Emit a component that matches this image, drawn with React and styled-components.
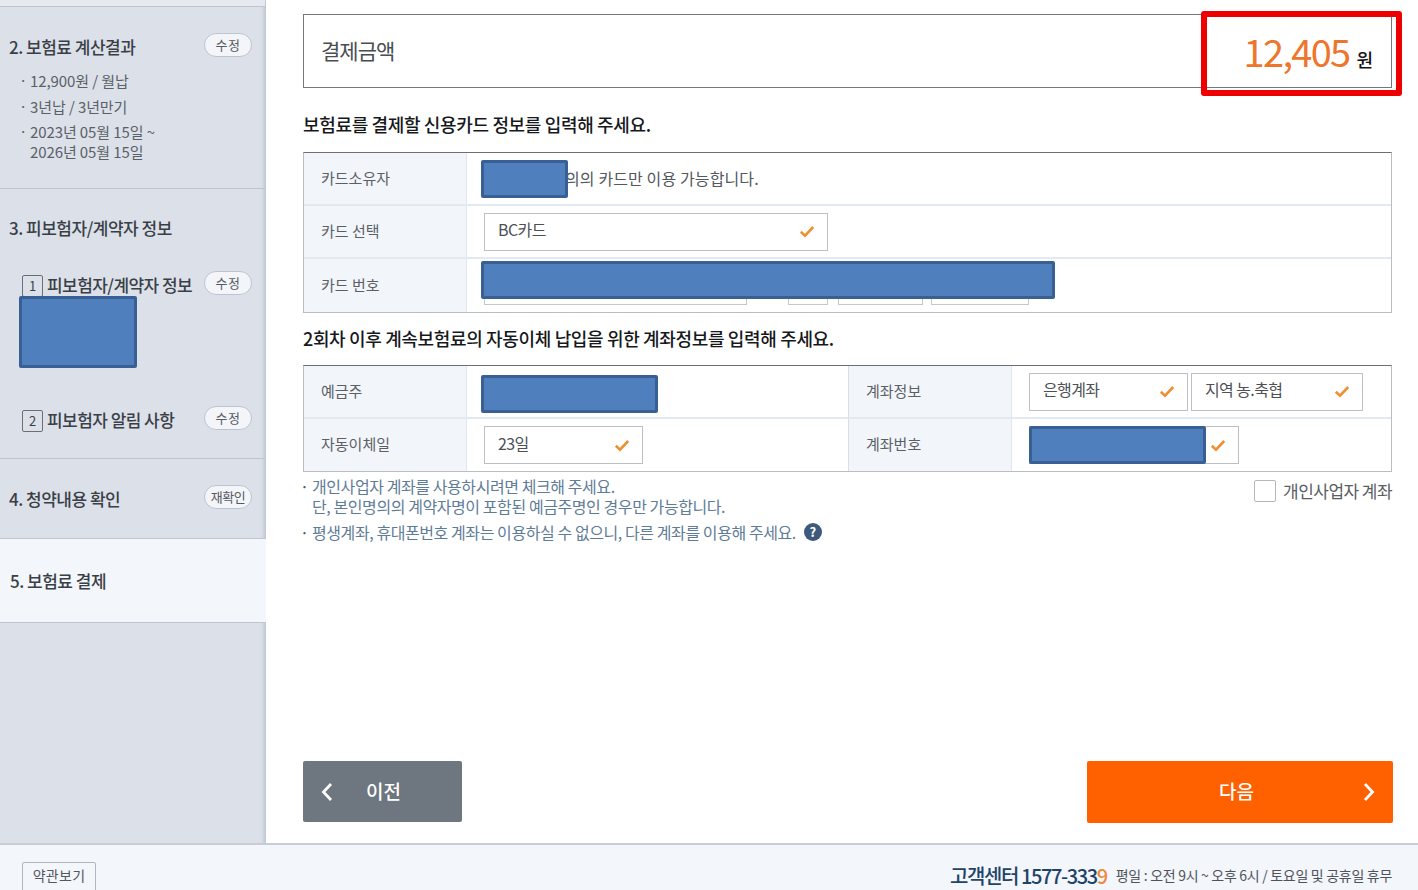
import React from 'react';
import styled, {createGlobalStyle} from 'styled-components';

const FONT = '"Noto Sans CJK KR", "Noto Sans", sans-serif';

const Global = createGlobalStyle`
	html, body {
		margin: 0;
		padding: 0;
		background: #fff;
		font-family: ${FONT};
	}
	* {
		box-sizing: border-box;
	}
`;

const Page = styled.div`
	width: 1418px;
	height: 890px;
	overflow: hidden;
	display: flex;
	flex-direction: column;
`;

const Body = styled.div`
	display: flex;
	height: 843px;
`;

const Side = styled.aside`
	width: 266px;
	flex: none;
	background: #dce1e9;
	border-right: 1px solid #c3c8d1;
	box-shadow: inset -4px 0 3px -2px #c6ccd6;
`;

const TopStrip = styled.div`
	height: 6px;
	background: #e6eaf0;
`;

const SideBlock = styled.section`
	position: relative;
	height: ${(p) => p.$h}px;
	padding: ${(p) => p.$pad || '0'};
	border-top: 1px solid #bfc4ce;
	background: ${(p) => (p.$active ? '#f3f6fb' : 'transparent')};
	margin-right: ${(p) => (p.$active ? '-1px' : '0')};
	border-bottom: ${(p) => (p.$active ? '1px solid #bfc4ce' : '0')};
`;

const SideHead = styled.div`
	display: flex;
	justify-content: space-between;
	align-items: center;
	padding: 0 13px 0 ${(p) => p.$left || 9}px;
`;

const SideTitle = styled.h3`
	margin: 0;
	font-size: 17px;
	font-weight: 500;
	letter-spacing: -0.5px;
	line-height: 24px;
	color: #3a3f47;
`;

const Pill = styled.button`
	height: 24px;
	width: 48px;
	margin-bottom: 4px;
	padding: 0;
	border: 1px solid #bcc3d2;
	border-radius: 12px;
	background: #f3f5f9;
	color: #555b63;
	font-family: ${FONT};
	font-size: 13px;
	letter-spacing: ${(p) => (p.$small ? '-0.5px' : '0.5px')};
	line-height: 20px;
`;

const Facts = styled.ul`
	list-style: none;
	margin: 10px 0 0;
	padding: 0 0 0 21px;
	color: #5b6068;
	font-size: 15px;
	letter-spacing: -0.1px;
	line-height: 20px;
`;

const Fact = styled.li`
	position: relative;
	padding-left: 9px;
	margin-bottom: 5.5px;
	&::before {
		content: '·';
		position: absolute;
		left: -2px;
		top: -1px;
	}
`;

const SubRow = styled.div`
	display: flex;
	align-items: center;
	justify-content: space-between;
	padding: 0 13px 0 22px;
	margin-top: ${(p) => p.$top}px;
`;

const SubLabel = styled.div`
	display: flex;
	align-items: center;
	gap: 4px;
	font-size: 17px;
	font-weight: 500;
	letter-spacing: -0.55px;
	color: #3a3f47;
	line-height: 24px;
`;

const NumBox = styled.span`
	width: 21px;
	height: 22px;
	margin-top: 2px;
	display: inline-flex;
	align-items: center;
	justify-content: center;
	border: 1px solid #6b7076;
	border-radius: 2px;
	font-size: 13px;
	font-weight: 400;
	letter-spacing: 0;
`;

const Redact = styled.div`
	position: absolute;
	left: ${(p) => p.$l}px;
	top: ${(p) => p.$t}px;
	width: ${(p) => p.$w}px;
	height: ${(p) => p.$h}px;
	background: #4f7fbc;
	border: 3px solid #386094;
	border-radius: 2px;
	z-index: 2;
`;

const Main = styled.main`
	flex: 1;
	display: flex;
	flex-direction: column;
	padding: 14px 26px 20px 37px;
`;

const AmountBox = styled.div`
	position: relative;
	height: 74px;
	flex: none;
	display: flex;
	align-items: center;
	justify-content: space-between;
	padding: 0 18px 0 17px;
	border: 1px solid #74777c;
`;

const AmountLabel = styled.div`
	padding-bottom: 3px;
	font-size: 21px;
	letter-spacing: -1px;
	color: #4a4d52;
`;

const AmountValue = styled.div`
	display: flex;
	align-items: baseline;
	gap: 7px;
	color: #111;
	font-size: 18px;
	font-weight: 500;
`;

const Price = styled.span`
	font-size: 38px;
	font-weight: 400;
	letter-spacing: -1.7px;
	color: #f0752c;
	line-height: 44px;
`;

const RedFrame = styled.div`
	position: absolute;
	left: 897px;
	top: -4px;
	width: 201px;
	height: 85px;
	border: 6px solid #ee0000;
	border-radius: 3px;
`;

const Heading = styled.h2`
	margin: ${(p) => p.$top}px 0 ${(p) => p.$bottom}px;
	font-size: 18px;
	font-weight: 500;
	letter-spacing: -0.35px;
	line-height: 26px;
	color: #16181b;
`;

const Table = styled.div`
	display: grid;
	grid-template-columns: ${(p) => p.$cols};
	grid-template-rows: ${(p) => p.$rows};
	border: 1px solid #b9bdc4;
	border-top: 1px solid #6c7076;
	flex: none;
`;

const Th = styled.div`
	display: flex;
	align-items: center;
	padding: 0 0 3px 17px;
	background: #f2f6fb;
	border-right: 1px solid #e0e6ee;
	border-left: ${(p) => (p.$second ? '1px solid #d8dee6' : '0')};
	border-bottom: ${(p) => (p.$last ? '0' : '2px solid #e3e9f0')};
	font-size: 15px;
	color: #5c6066;
`;

const Td = styled.div`
	position: relative;
	display: flex;
	align-items: center;
	gap: ${(p) => p.$gap || 0}px;
	padding-left: 17px;
	border-bottom: ${(p) => (p.$last ? '0' : '2px solid #e3e9f0')};
	font-size: 16px;
	color: #54575c;
`;

const OwnerNote = styled.span`
	margin-left: 81px;
	padding-bottom: 1px;
	letter-spacing: 0.12px;
`;

const Select = styled.div`
	width: ${(p) => p.$w}px;
	height: 38px;
	flex: none;
	display: flex;
	align-items: center;
	justify-content: space-between;
	padding: 0 12px 5px 13px;
	border: 1px solid #bcbfc3;
	background: #fff;
	font-size: 16px;
	letter-spacing: -0.6px;
	color: #4d5055;
`;

const Input = styled.div`
	width: ${(p) => p.$w}px;
	height: 38px;
	flex: none;
	margin-left: ${(p) => p.$gap || 0}px;
	border: 1px solid #c5c8cc;
`;

const Notes = styled.div`
	display: flex;
	justify-content: space-between;
	align-items: flex-start;
	margin-left: -3px;
	padding-top: 4px;
`;

const NoteList = styled.ul`
	list-style: none;
	margin: 0;
	padding: 0;
	font-size: 16px;
	letter-spacing: -0.42px;
	line-height: 20px;
	color: #5f7c97;
`;

const NoteItem = styled.li`
	position: relative;
	display: flex;
	align-items: center;
	flex-wrap: wrap;
	padding-left: 12px;
	margin-bottom: 6px;
	&::before {
		content: '·';
		position: absolute;
		left: 0;
		top: 0;
		color: #555;
	}
`;

const Biz = styled.label`
	display: flex;
	align-items: center;
	gap: 7px;
	margin-top: 2px;
	font-size: 17px;
	letter-spacing: -0.55px;
	color: #5a5d62;
`;

const Box = styled.span`
	width: 22px;
	height: 22px;
	border: 1px solid #b4b7bb;
	border-radius: 2px;
	background: #fff;
`;

const Help = styled.span`
	width: 18px;
	height: 18px;
	margin-left: 8px;
	border-radius: 50%;
	background: #3d5a7d;
	color: #fff;
	display: inline-flex;
	align-items: center;
	justify-content: center;
	font-size: 13px;
	font-weight: 700;
	letter-spacing: 0;
`;

const Actions = styled.div`
	margin-top: auto;
	display: flex;
	justify-content: space-between;
	align-items: flex-start;
`;

const Prev = styled.button`
	width: 159px;
	height: 61px;
	border: 0;
	border-radius: 2px;
	background: #6e7680;
	color: #fff;
	font-family: ${FONT};
	font-size: 19px;
	font-weight: 500;
	display: flex;
	align-items: center;
	gap: 33px;
	padding: 0 0 0 18px;
`;

const Next = styled(Prev)`
	width: 306px;
	height: 62px;
	margin-right: -1px;
	background: #ff6000;
	justify-content: space-between;
	padding: 0 18px 0 132px;
`;

const BtnText = styled.span`
	padding-bottom: 3px;
`;

const Footer = styled.footer`
	height: 47px;
	flex: none;
	display: flex;
	align-items: center;
	justify-content: space-between;
	padding: 15px 26px 0 22px;
	background: #f3f6fb;
	border-top: 2px solid #c9ccd4;
`;

const TermsBtn = styled.button`
	width: 74px;
	height: 30px;
	margin-bottom: -3px;
	padding: 0 0 4px;
	border: 1px solid #b2b5bb;
	border-radius: 2px;
	background: #f3f6fb;
	color: #54575c;
	font-family: ${FONT};
	font-size: 14px;
	letter-spacing: 0.3px;
`;

const Contact = styled.div`
	display: flex;
	align-items: center;
	gap: 9px;
	font-size: 14px;
	letter-spacing: -0.3px;
	color: #50545a;
`;

const Phone = styled.span`
	font-size: 20px;
	font-weight: 500;
	letter-spacing: -1.4px;
	color: #1f4468;
`;

const Orange = styled.span`
	color: #ec8a3a;
`;

function Check() {
	return (
		<svg width="16" height="13" viewBox="0 0 16 13" style={{marginTop: 5}}>
			<path d="M1.8 6.8 L6 10.6 L14.2 2" fill="none" stroke="#ee8f33" strokeWidth="2.6"/>
		</svg>
	);
}

function Chevron({left}) {
	return (
		<svg width="12" height="20" viewBox="0 0 12 20">
			<path d={left ? 'M10 2 L2.5 10 L10 18' : 'M2 2 L9.5 10 L2 18'} fill="none" stroke="#fff" strokeWidth="2.8"/>
		</svg>
	);
}

function Dropdown({w, children}) {
	return (
		<Select $w={w}>
			<span>{children}</span>
			<Check/>
		</Select>
	);
}

export default function App() {
	return (
		<Page>
			<Global/>
			<Body>
				<Side>
					<TopStrip/>
					<SideBlock $h={182} $pad="26px 0 0">
						<SideHead>
							<SideTitle>2. 보험료 계산결과</SideTitle>
							<Pill>수정</Pill>
						</SideHead>
						<Facts>
							<Fact>12,900원 / 월납</Fact>
							<Fact>3년납 / 3년만기</Fact>
							<Fact>2023년 05월 15일 ~<br/>2026년 05월 15일</Fact>
						</Facts>
					</SideBlock>
					<SideBlock $h={270} $pad="27px 0 0">
						<SideHead>
							<SideTitle>3. 피보험자/계약자 정보</SideTitle>
						</SideHead>
						<SubRow $top={31}>
							<SubLabel><NumBox>1</NumBox>피보험자/계약자 정보</SubLabel>
							<Pill>수정</Pill>
						</SubRow>
						<Redact $l={19} $t={107} $w={118} $h={72}/>
						<SubRow $top={107}>
							<SubLabel><NumBox>2</NumBox>피보험자 알림 사항</SubLabel>
							<Pill>수정</Pill>
						</SubRow>
					</SideBlock>
					<SideBlock $h={80} $pad="26px 0 0">
						<SideHead>
							<SideTitle>4. 청약내용 확인</SideTitle>
							<Pill $small>재확인</Pill>
						</SideHead>
					</SideBlock>
					<SideBlock $h={85} $active $pad="30px 0 0">
						<SideHead $left={10}>
							<SideTitle>5. 보험료 결제</SideTitle>
						</SideHead>
					</SideBlock>
				</Side>
				<Main>
					<AmountBox>
						<AmountLabel>결제금액</AmountLabel>
						<AmountValue><Price>12,405</Price>원</AmountValue>
						<RedFrame/>
					</AmountBox>
					<Heading $top={23} $bottom={15}>보험료를 결제할 신용카드 정보를 입력해 주세요.</Heading>
					<Table $cols="163px 1fr" $rows="53px 53px 53px">
						<Th>카드소유자</Th>
						<Td>
							<Redact $l={14} $t={7} $w={87} $h={38}/>
							<OwnerNote>의의 카드만 이용 가능합니다.</OwnerNote>
						</Td>
						<Th>카드 선택</Th>
						<Td><Dropdown w={344}>BC카드</Dropdown></Td>
						<Th $last>카드 번호</Th>
						<Td $last>
							<Input $w={263}/>
							<Input $w={40} $gap={41}/>
							<Input $w={85} $gap={10}/>
							<Input $w={98} $gap={8}/>
							<Redact $l={14} $t={2} $w={574} $h={38}/>
						</Td>
					</Table>
					<Heading $top={12} $bottom={14}>2회차 이후 계속보험료의 자동이체 납입을 위한 계좌정보를 입력해 주세요.</Heading>
					<Table $cols="163px 381px 164px 1fr" $rows="53px 52px">
						<Th>예금주</Th>
						<Td><Redact $l={14} $t={9} $w={177} $h={38}/></Td>
						<Th $second>계좌정보</Th>
						<Td $gap={3}>
							<Dropdown w={159}>은행계좌</Dropdown>
							<Dropdown w={172}>지역 농.축협</Dropdown>
						</Td>
						<Th $last>자동이체일</Th>
						<Td $last><Dropdown w={159}>23일</Dropdown></Td>
						<Th $last $second>계좌번호</Th>
						<Td $last>
							<Dropdown w={210}>&nbsp;</Dropdown>
							<Redact $l={17} $t={7} $w={177} $h={38}/>
						</Td>
					</Table>
					<Notes>
						<NoteList>
							<NoteItem>개인사업자 계좌를 사용하시려면 체크해 주세요.<br/>단, 본인명의의 계약자명이 포함된 예금주명인 경우만 가능합니다.</NoteItem>
							<NoteItem>평생계좌, 휴대폰번호 계좌는 이용하실 수 없으니, 다른 계좌를 이용해 주세요.<Help>?</Help></NoteItem>
						</NoteList>
						<Biz><Box/>개인사업자 계좌</Biz>
					</Notes>
					<Actions>
						<Prev><Chevron left/><BtnText>이전</BtnText></Prev>
						<Next><BtnText>다음</BtnText><Chevron/></Next>
					</Actions>
				</Main>
			</Body>
			<Footer>
				<TermsBtn>약관보기</TermsBtn>
				<Contact>
					<Phone>고객센터 1577-333<Orange>9</Orange></Phone>
					평일 : 오전 9시 ~ 오후 6시 / 토요일 및 공휴일 휴무
				</Contact>
			</Footer>
		</Page>
	);
}
